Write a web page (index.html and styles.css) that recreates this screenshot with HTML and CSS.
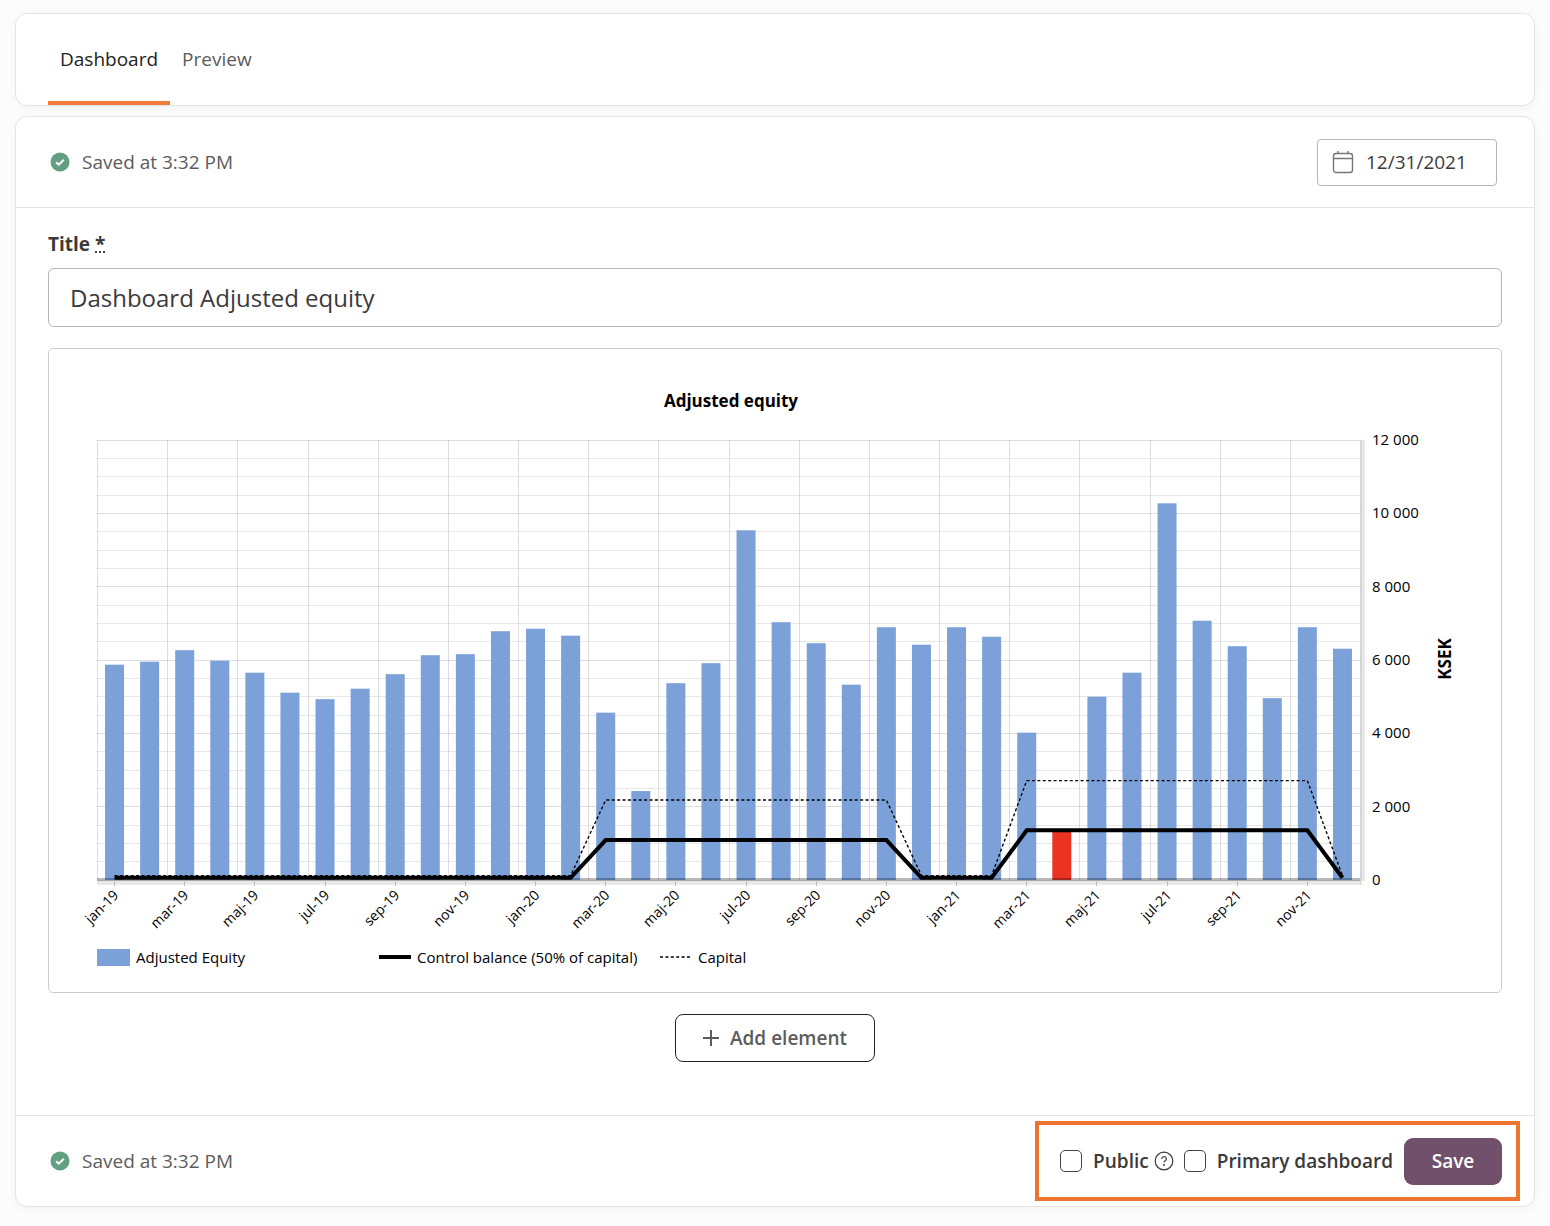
FILE: index.html
```
<!DOCTYPE html>
<html lang="en">

<head>
    <meta charset="UTF-8">
    <meta name="viewport" content="width=device-width, initial-scale=1.0">
    <title>Dashboard Adjusted equity</title>
    <link rel="stylesheet" href="styles.css">
</head>

<body>
    <nav class="card tabs">
        <a class="tab active" href="#dashboard">Dashboard</a>
        <a class="tab" href="#preview">Preview</a>
    </nav>

    <form class="card" id="dashboard" onsubmit="return false">
        <header class="bar bar-top">
            <div class="saved">
                <svg class="check" viewBox="0 0 20 20">
                    <circle cx="10" cy="10" r="9.5" />
                    <path d="M6.2 10.2l2.6 2.5 5-5" />
                </svg>
                Saved at 3:32 PM
            </div>
            <div class="date">
                <svg class="calendar" viewBox="0 0 22 24">
                    <rect x="1.5" y="3.5" width="19" height="19" rx="2.5" />
                    <path d="M1.5 8.5h19M6 1v3M16 1v3" />
                </svg>
                <input type="text" value="12/31/2021" aria-label="Date">
            </div>
        </header>

        <div class="content">
            <label class="label" for="title">Title <abbr title="required">*</abbr></label>
            <input class="title" id="title" type="text" value="Dashboard Adjusted equity">

            <div class="chart">
                <svg id="chart" viewBox="0 0 1452 643">
                    <text class="chart-title" x="682" y="58">Adjusted equity</text>
                    <g id="grid"></g>
                    <g id="bars"></g>
                    <g id="axes"></g>
                    <g id="lines"></g>
                    <g id="labels"></g>
                    <text class="unit" transform="translate(1402 310) rotate(-90)">KSEK</text>
                    <g class="legend">
                        <rect class="bar-blue" x="48" y="600" width="33" height="17" />
                        <text x="87" y="614">Adjusted Equity</text>
                        <path class="control" d="M330 608h32" />
                        <text x="368" y="614">Control balance (50% of capital)</text>
                        <path class="capital" d="M611 608h30" />
                        <text x="649" y="614">Capital</text>
                    </g>
                </svg>
            </div>

            <button class="add" type="button">
                <svg class="plus" viewBox="0 0 16 16">
                    <path d="M8 0v16M0 8h16" />
                </svg>
                Add element
            </button>
        </div>

        <footer class="bar bar-bottom">
            <div class="saved">
                <svg class="check" viewBox="0 0 20 20">
                    <circle cx="10" cy="10" r="9.5" />
                    <path d="M6.2 10.2l2.6 2.5 5-5" />
                </svg>
                Saved at 3:32 PM
            </div>
            <div class="actions">
                <input type="checkbox" id="public">
                <label for="public">Public</label>
                <svg class="help" viewBox="0 0 20 20">
                    <circle cx="10" cy="10" r="8.8" />
                    <path d="M7.6 8a2.4 2.2 0 1 1 3.6 1.8c-.8.5-1.2.8-1.2 1.7" />
                    <circle class="dot" cx="10" cy="14" r="1" />
                </svg>
                <input type="checkbox" id="primary">
                <label for="primary">Primary dashboard</label>
                <button class="save" type="submit">Save</button>
            </div>
        </footer>
    </form>
    <script src="script.js"></script>
</body>

</html>
```
FILE: styles.css
```
* {
    box-sizing: border-box;
}

body {
    margin: 0;
    padding: 13px 15px 19px;
    background-color: #fcfcfc;
    color: #3a3a3a;
    font-family: "Open Sans", "Noto Sans", sans-serif;
    font-size: 19px;
    line-height: 24px;
}

input,
button {
    font: inherit;
    color: inherit;
}

svg {
    display: block;
    fill: none;
    stroke: currentColor;
}

.card {
    background-color: white;
    border: 1px solid #e4e4e4;
    border-radius: 12px;
    box-shadow: 0 2px 10px rgba(0, 0, 0, 0.04);
}

/* tabs */

.tabs {
    display: flex;
    height: 93px;
    margin-bottom: 10px;
    padding: 0 32px;
}

.tab {
    display: flex;
    align-items: center;
    padding: 2px 12px 0;
    border-bottom: 4px solid transparent;
    color: #5c5c5c;
    text-decoration: none;
}

.tab.active {
    color: #222;
    border-color: #f07b3a;
}

/* top and bottom bars */

.bar {
    display: flex;
    align-items: center;
    justify-content: space-between;
    height: 91px;
    padding-left: 34px;
}

.bar-top {
    padding-right: 37px;
    border-bottom: 1px solid #e4e4e4;
}

.bar-bottom {
    padding-right: 14px;
    border-top: 1px solid #e4e4e4;
}

.saved {
    display: flex;
    align-items: center;
    gap: 12px;
    color: #5c5c5c;
}

.check {
    width: 20px;
    height: 20px;
    stroke: white;
    stroke-width: 2;
}

.check circle {
    fill: #63a082;
    stroke: none;
}

.date {
    display: flex;
    align-items: center;
    gap: 12px;
    width: 180px;
    height: 47px;
    padding: 0 14px;
    border: 1px solid #b5b5b5;
    border-radius: 4px;
}

.calendar {
    flex: none;
    width: 22px;
    height: 24px;
    color: #777;
    stroke-width: 1.4;
}

.date input {
    width: 100%;
    padding: 0;
    border: 0;
    background: none;
}

/* form */

.content {
    padding: 24px 32px 53px;
}

.label {
    display: block;
    font-weight: 700;
}

.title {
    width: 100%;
    height: 59px;
    margin-top: 12px;
    padding: 0 21px;
    border: 1px solid #b5b5b5;
    border-radius: 6px;
    background-color: white;
    font-size: 24px;
}

.chart {
    margin: 21px 0;
    border: 1px solid #ccc;
    border-radius: 5px;
}

.add {
    display: flex;
    align-items: center;
    justify-content: center;
    gap: 11px;
    width: 200px;
    height: 48px;
    margin: 0 auto;
    border: 1px solid #222;
    border-radius: 8px;
    background-color: white;
    color: #5c5c5c;
    font-weight: 600;
}

.plus {
    width: 16px;
    height: 16px;
    stroke-width: 2;
}

/* chart */

#chart {
    width: 100%;
    height: auto;
}

#chart text {
    fill: black;
    stroke: none;
    font-size: 15px;
}

#chart .month {
    font-size: 14px;
    text-anchor: end;
}

#chart .chart-title {
    font-size: 17px;
    font-weight: 700;
    text-anchor: middle;
}

#chart .unit {
    font-size: 17px;
    font-weight: 700;
    text-anchor: middle;
}

#grid {
    stroke: rgba(0, 0, 0, 0.09);
}

#grid .strong {
    stroke: rgba(0, 0, 0, 0.13);
}

.bar-blue {
    fill: #7ba1d8;
    stroke: none;
}

.bar-red {
    fill: #ea3323;
    stroke: none;
}

.axis {
    fill: #e8e8e8;
    stroke: none;
}

.axis-line {
    fill: rgba(0, 0, 0, 0.28);
    stroke: none;
}

.axis-side {
    fill: rgba(0, 0, 0, 0.08);
    stroke: none;
}

.tick {
    stroke: #bbb;
}

.control {
    stroke: black;
    stroke-width: 4;
}

.capital {
    stroke: black;
    stroke-width: 1.4;
    stroke-dasharray: 3 2.4;
}

/* actions */

.actions {
    display: flex;
    align-items: center;
    height: 80px;
    padding: 0 14px 0 21px;
    border: 4px solid #ee752f;
    font-weight: 600;
}

.actions input {
    appearance: none;
    width: 22px;
    height: 22px;
    margin: 0 11px 0 0;
    border: 1px solid #444;
    border-radius: 5px;
    background-color: white;
}

.actions input:checked {
    background-color: #70506a;
}

.help {
    width: 20px;
    height: 20px;
    margin: 0 10px 0 5px;
    stroke-width: 1.2;
}

.help .dot {
    fill: currentColor;
    stroke: none;
}

.save {
    width: 98px;
    height: 47px;
    margin-left: 11px;
    border: 0;
    border-radius: 9px;
    background-color: #70506a;
    color: white;
}
```
FILE: script.js
```
var equity = [5872, 5954, 6268, 5981, 5654, 5109, 4932, 5218, 5614, 6131, 6159, 6785,
    6853, 6663, 4564, 2425, 5368, 5913, 9538, 7031, 6458, 5327, 6894, 6417,
    6894, 6635, 4019, 1335, 5000, 5654, 10273, 7071, 6377, 4960, 6894, 6308];
var months = ["jan", "mar", "maj", "jul", "sep", "nov"];

// plot area inside the svg
var left = 48, right = 1311, top0 = 91, bottom = 531;
var step = (right - left) / equity.length;

function y(value) {
    return bottom - value * (bottom - top0) / 12000;
}

function center(i) {
    return left + step * (i + 0.5);
}

// share capital per month, control balance is half of it
function capital(i) {
    if (i >= 14 && i <= 22) return 2180;
    if (i >= 26 && i <= 34) return 2710;
    return 120;
}

function add(parent, tag, attrs, text) {
    var el = document.createElementNS("http://www.w3.org/2000/svg", tag);
    for (var key in attrs) el.setAttribute(key, attrs[key]);
    if (text) el.textContent = text;
    document.getElementById(parent).appendChild(el);
}

// grid
for (var v = 500; v <= 12000; v += 500) {
    add("grid", "path", {
        d: "M" + left + " " + (Math.floor(y(v)) + 0.5) + "H" + right,
        class: v % 2000 == 0 ? "strong" : ""
    });
}
for (var i = 0; i <= equity.length; i += 2) {
    add("grid", "path", {
        d: "M" + (Math.round(left + step * i) + 0.5) + " " + top0 + "V" + bottom,
        class: "strong"
    });
}

// bars, red when the equity is below the control balance
equity.forEach(function (value, i) {
    add("bars", "rect", {
        x: center(i) - 9.5, y: y(value), width: 19, height: bottom - y(value),
        class: value < capital(i) / 2 ? "bar-red" : "bar-blue"
    });
});

// axes
add("axes", "rect", { x: left, y: bottom, width: right - left + 1, height: 5, class: "axis" });
add("axes", "rect", { x: right, y: top0, width: 5, height: bottom - top0 + 1, class: "axis" });
add("axes", "rect", { x: left, y: bottom - 2, width: right - left, height: 3, class: "axis-line" });
add("axes", "rect", { x: right, y: top0, width: 2, height: bottom - top0 + 5, class: "axis-side" });

// lines
var controlPath = "", capitalPath = "";
equity.forEach(function (value, i) {
    var cmd = i == 0 ? "M" : "L";
    controlPath += cmd + center(i) + " " + y(capital(i) / 2);
    capitalPath += cmd + center(i) + " " + y(capital(i));
});
add("lines", "path", { d: controlPath, class: "control" });
add("lines", "path", { d: capitalPath, class: "capital" });

// labels
for (var i = 0; i < equity.length; i += 2) {
    var x = Math.floor(center(i)) + 0.5;
    add("axes", "path", { d: "M" + x + " " + bottom + "v6", class: "tick" });
    add("labels", "text", {
        transform: "translate(" + (x + 5) + " 547) rotate(-45)",
        class: "month"
    }, months[i / 2 % 6] + "-" + (19 + Math.floor(i / 12)));
}
for (var v = 0; v <= 12000; v += 2000) {
    add("labels", "text", { x: 1323, y: y(v) + 5 }, v ? v / 1000 + " 000" : "0");
}
```
